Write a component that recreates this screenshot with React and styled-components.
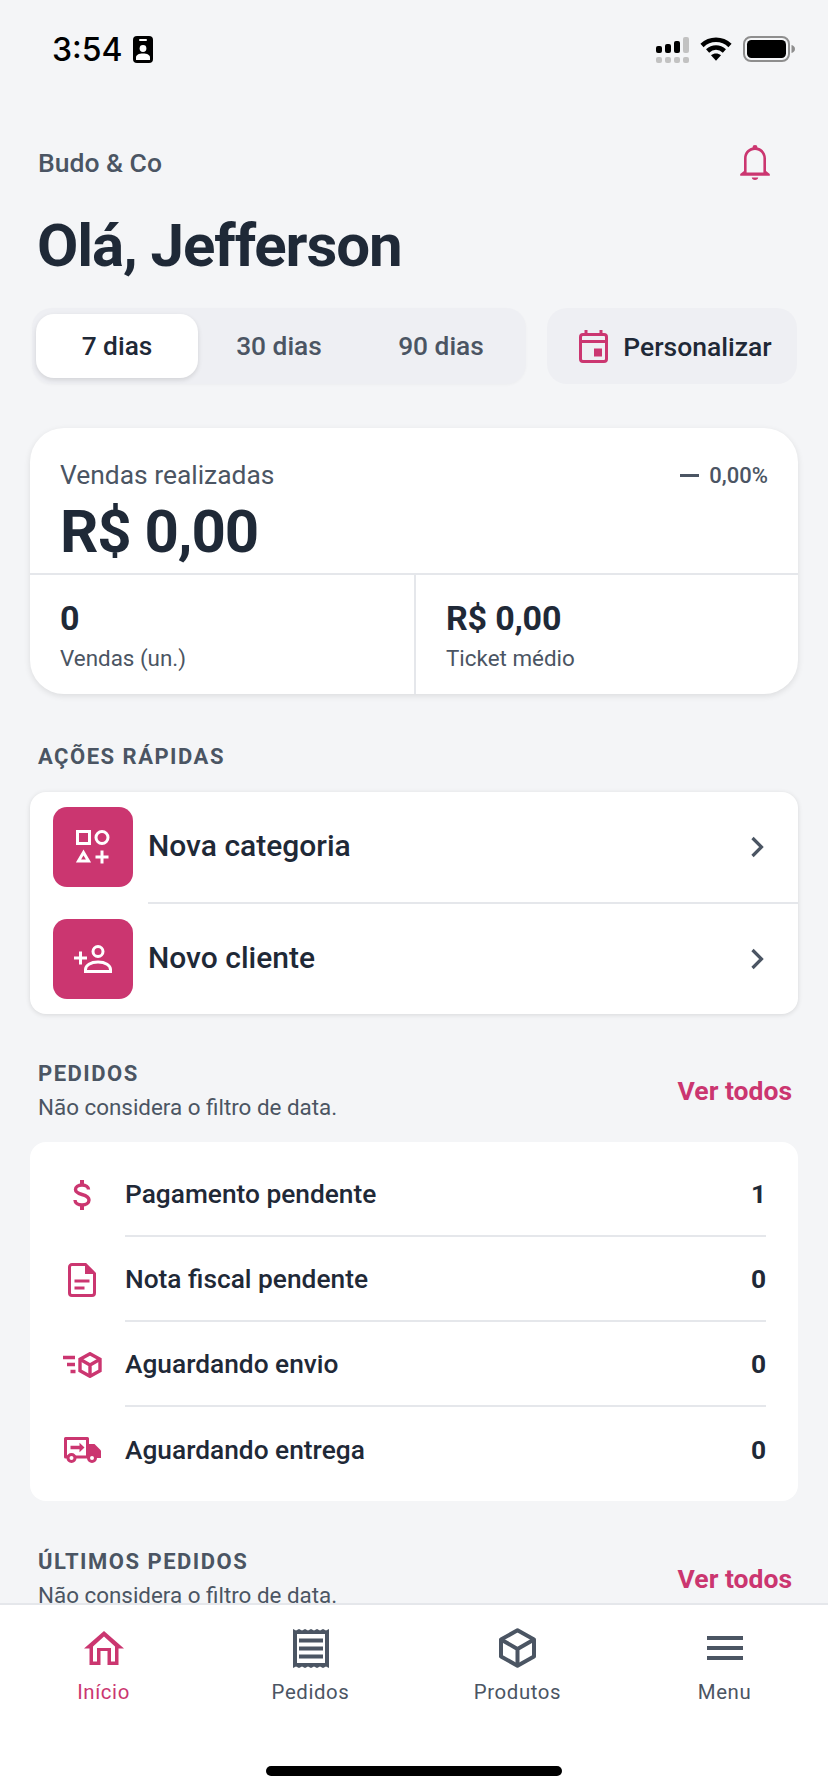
import React from 'react';
import styled, { createGlobalStyle } from 'styled-components';

const pink = '#cb3670';
const dark = '#1f2937';
const grey = '#4b5563';
const line = '#e5e7eb';

const GlobalStyle = createGlobalStyle`
  html, body {
    margin: 0;
    padding: 0;
    background: #f4f5f7;
  }
  * {
    box-sizing: border-box;
  }
`;

const Screen = styled.div`
  width: 828px;
  height: 1792px;
  display: flex;
  flex-direction: column;
  overflow: hidden;
  background: #f4f5f7;
  font-family: Roboto, "Liberation Sans", sans-serif;
  color: ${dark};
`;

const Scroll = styled.div`
  flex: 1;
  min-height: 0;
  overflow: hidden;
`;

const StatusBar = styled.div`
  height: 98px;
  padding: 36px 33px 0 52px;
  display: flex;
  justify-content: space-between;
  align-items: flex-start;
`;

const StatusLeft = styled.div`
  display: flex;
  align-items: center;
  gap: 10px;
`;

const Time = styled.span`
  font-family: Inter, sans-serif;
  font-size: 32px;
  font-weight: 500;
  line-height: 27px;
  color: #000;
`;

const StatusRight = styled.div`
  display: flex;
  align-items: flex-start;
  gap: 11px;
`;

const Content = styled.div`
  padding: 0 30px;
`;

const TopRow = styled.div`
  margin-top: 44px;
  height: 40px;
  padding: 0 28px 0 8px;
  display: flex;
  justify-content: space-between;
  align-items: center;
`;

const Brand = styled.span`
  font-size: 26.5px;
  font-weight: 500;
  color: ${grey};
`;

const Title = styled.h1`
  margin: 29px 0 0;
  padding-left: 7px;
  font-size: 60px;
  font-weight: 700;
  line-height: 70px;
  letter-spacing: -1.1px;
  color: ${dark};
`;

const FilterRow = styled.div`
  margin-top: 27px;
  display: flex;
  gap: 21px;
  padding: 0 1px 0 2px;
`;

const Segment = styled.div`
  width: 494px;
  height: 76px;
  padding: 6px 4px;
  display: flex;
  background: #eeeff3;
  border-radius: 20px;
  box-shadow: 0 1px 3px rgba(0, 0, 0, 0.03);
`;

const Tab = styled.div`
  flex: 1;
  display: flex;
  align-items: center;
  justify-content: center;
  border-radius: 18px;
  font-size: 26.3px;
  font-weight: 500;
  color: ${p => (p.$active ? dark : grey)};
  background: ${p => (p.$active ? '#fff' : 'transparent')};
  box-shadow: ${p => (p.$active ? '0 2px 5px rgba(0, 0, 0, 0.12)' : 'none')};
`;

const CustomButton = styled.div`
  flex: 1;
  height: 76px;
  padding-left: 7px;
  display: flex;
  align-items: center;
  justify-content: center;
  gap: 15px;
  background: #eeeff3;
  border-radius: 20px;
  font-size: 26.5px;
  font-weight: 500;
  color: ${dark};
`;

const SalesCard = styled.div`
  margin-top: 44px;
  height: 266px;
  background: #fff;
  border-radius: 34px;
  box-shadow: 0 2px 6px rgba(0, 0, 0, 0.1);
  display: flex;
  flex-direction: column;
`;

const SalesTop = styled.div`
  height: 147px;
  padding: 30px 30px 0;
  border-bottom: 2px solid ${line};
`;

const SalesHead = styled.div`
  display: flex;
  justify-content: space-between;
  align-items: center;
  height: 34px;
`;

const SalesLabel = styled.span`
  font-size: 26.4px;
  color: ${grey};
`;

const Change = styled.span`
  display: flex;
  align-items: center;
  gap: 10px;
  font-size: 22px;
  font-weight: 500;
  color: ${grey};
`;

const Dash = styled.i`
  display: block;
  width: 19px;
  height: 3px;
  background: ${grey};
`;

const SalesValue = styled.div`
  margin-top: 7px;
  font-size: 60px;
  font-weight: 700;
  line-height: 66px;
  letter-spacing: -1.1px;
  color: ${dark};
`;

const SalesBottom = styled.div`
  flex: 1;
  display: grid;
  grid-template-columns: 1fr 1fr;
`;

const Stat = styled.div`
  padding: 23px 30px 0;
  & + & {
    border-left: 2px solid ${line};
  }
`;

const StatValue = styled.div`
  font-size: 34px;
  font-weight: 700;
  line-height: 40px;
  letter-spacing: -0.2px;
  color: ${dark};
`;

const StatLabel = styled.div`
  margin-top: 3px;
  font-size: 22.4px;
  line-height: 34px;
  color: ${grey};
`;

const SectionLabel = styled.div`
  padding-left: ${p => (p.$flush ? '0' : '8px')};
  margin-top: ${p => p.$top || 0}px;
  font-size: 22px;
  font-weight: 700;
  letter-spacing: 1.5px;
  line-height: 28px;
  color: ${grey};
`;

const QuickCard = styled.div`
  margin-top: 21px;
  height: 222px;
  padding-top: 15px;
  background: #fff;
  border-radius: 16px;
  box-shadow: 0 1px 5px rgba(0, 0, 0, 0.12);
`;

const QuickRow = styled.div`
  height: 80px;
  padding-left: 23px;
  display: flex;
  align-items: center;
  gap: 15px;
  & + & {
    margin-top: 32px;
  }
`;

const QuickIcon = styled.div`
  width: 80px;
  height: 80px;
  flex: none;
  display: flex;
  align-items: center;
  justify-content: center;
  background: ${pink};
  border-radius: 14px;
`;

const QuickBody = styled.div`
  flex: 1;
  height: 80px;
  padding: 0 33px 0 0;
  display: flex;
  align-items: center;
  justify-content: space-between;
  position: relative;
  font-size: 30px;
  font-weight: 500;
  color: ${dark};
  &::after {
    content: ${p => (p.$divided ? '""' : 'none')};
    position: absolute;
    left: 0;
    right: 0;
    bottom: -17px;
    height: 2px;
    background: ${line};
  }
`;

const QuickLabel = styled.span`
  margin-top: -4px;
`;

const SectionHead = styled.div`
  margin-top: ${p => p.$top}px;
  padding: 0 6px 0 8px;
  display: flex;
  justify-content: space-between;
  align-items: center;
`;

const SectionText = styled.div`
  display: flex;
  flex-direction: column;
  gap: 5px;
`;

const SectionNote = styled.div`
  font-size: 22.4px;
  line-height: 28px;
  color: ${grey};
`;

const SeeAll = styled.span`
  font-size: 26.5px;
  font-weight: 700;
  color: ${pink};
`;

const OrdersCard = styled.div`
  margin-top: 21px;
  height: 359px;
  padding: 10px 32px 0;
  background: #fff;
  border-radius: 16px;
`;

const OrderRow = styled.div`
  height: 85px;
  display: flex;
  align-items: center;
  gap: 23px;
`;

const OrderIcon = styled.div`
  width: 40px;
  flex: none;
  display: flex;
  justify-content: center;
`;

const OrderBody = styled.div`
  flex: 1;
  align-self: stretch;
  display: flex;
  align-items: center;
  justify-content: space-between;
  font-size: 26.3px;
  font-weight: 500;
  color: ${dark};
  border-bottom: ${p => (p.$last ? 'none' : `2px solid ${line}`)};
`;

const Count = styled.span`
  font-weight: 700;
`;

const Nav = styled.div`
  height: 189px;
  flex: none;
  background: #fff;
  border-top: 2px solid ${line};
  display: flex;
  flex-direction: column;
  align-items: center;
`;

const NavItems = styled.div`
  width: 100%;
  display: grid;
  grid-template-columns: repeat(4, 207px);
`;

const NavItem = styled.div`
  display: flex;
  flex-direction: column;
  align-items: center;
  font-size: 20.4px;
  letter-spacing: 0.6px;
  color: ${p => (p.$active ? pink : grey)};
`;

const NavIcon = styled.div`
  height: 44px;
  margin-top: 21px;
  display: flex;
  align-items: center;
  justify-content: center;
`;

const NavLabel = styled.div`
  margin-top: 8px;
  line-height: 28px;
`;

const HomeBar = styled.div`
  width: 296px;
  height: 10px;
  margin-top: 60px;
  background: #000;
  border-radius: 5px;
`;

const ContactIcon = () => (
  <svg width="20" height="27" viewBox="0 0 20 27">
    <rect width="20" height="27" rx="4" fill="#000" />
    <rect x="6" y="3" width="8" height="2" rx="1" fill="#fff" />
    <circle cx="10" cy="12.500" r="3.400" fill="#fff" />
    <path d="M3 24v-2.500c0-2.500 2.800-4 7-4s7 1.500 7 4V24z" fill="#fff" />
  </svg>
);

const SignalIcon = () => (
  <svg width="33" height="28" viewBox="0 0 33 28" style={{ marginTop: 1 }}>
    <rect x="0" y="9" width="6" height="7" rx="2" fill="#000" />
    <rect x="9" y="7" width="6" height="9" rx="2" fill="#000" />
    <rect x="18" y="4" width="6" height="12" rx="2" fill="#000" />
    <rect x="27" y="0" width="6" height="16" rx="2" fill="#c2c2c2" />
    <rect x="0" y="20" width="6" height="6" rx="2" fill="#c2c2c2" />
    <rect x="9" y="20" width="6" height="6" rx="2" fill="#c2c2c2" />
    <rect x="18" y="20" width="6" height="6" rx="2" fill="#c2c2c2" />
    <rect x="27" y="20" width="6" height="6" rx="2" fill="#c2c2c2" />
  </svg>
);

const WifiIcon = () => (
  <svg width="32" height="25" viewBox="0 0 32 25" fill="none" stroke="#000" strokeWidth="4.600">
    <path d="M2 9.500c8-7.600 20-7.600 28 0" />
    <path d="M7.600 15c5-4.600 11.800-4.600 16.800 0" />
    <path d="M16 24.800l-5-5.600c3-2.400 7-2.400 10 0z" fill="#000" stroke="none" />
  </svg>
);

const BatteryIcon = () => (
  <svg width="52" height="26" viewBox="0 0 52 26">
    <rect x="1" y="1" width="45" height="24" rx="7" fill="none" stroke="#8e8e8e" strokeWidth="2" />
    <rect x="4" y="4" width="39" height="18" rx="4.500" fill="#000" />
    <path d="M48.500 9c2 .6 3.500 2 3.500 4s-1.500 3.400-3.500 4z" fill="#8e8e8e" />
  </svg>
);

const BellIcon = () => (
  <svg width="30" height="35" viewBox="0 0 30 35">
    <path
      d="M15 0a2.500 2.500 0 0 1 2.500 2.600C22.600 3.700 26 8 26 13.500V26l3.800 3v1.800H.2V29L4 26V13.500C4 8 7.400 3.700 12.500 2.600A2.500 2.500 0 0 1 15 0zM15 5C10 5 6.600 8.700 6.600 13.500V27.500h16.800V13.500C23.400 8.700 20 5 15 5zM11.800 32.500h6.400c0 1.500-1.400 2.500-3.200 2.500s-3.200-1-3.200-2.500z"
      fill={pink}
      fillRule="evenodd"
    />
  </svg>
);

const CalendarIcon = () => (
  <svg width="29" height="33" viewBox="0 0 29 33" fill="none">
    <rect x="1.500" y="4.500" width="26" height="27" rx="2.500" stroke={pink} strokeWidth="3" />
    <path d="M1.500 11.500h26" stroke={pink} strokeWidth="3" />
    <path d="M7 0v5M22 0v5" stroke={pink} strokeWidth="3" />
    <rect x="15" y="18.500" width="8" height="8" fill={pink} />
  </svg>
);

const ShapesIcon = () => (
  <svg width="34" height="34" viewBox="0 0 34 34" fill="none" stroke="#fff" strokeWidth="3">
    <rect x="1.500" y="1.500" width="12" height="12" />
    <circle cx="26" cy="7.500" r="6" />
    <path d="M7.500 22.500l5 8.500h-10z" />
    <path d="M26 20.500v13M19.500 27h13" />
  </svg>
);

const PersonAddIcon = () => (
  <svg width="38" height="28" viewBox="0 0 38 28" fill="none" stroke="#fff" strokeWidth="3">
    <circle cx="24" cy="6.500" r="5" />
    <path d="M11.500 26.500v-2c0-4 5-7.500 12.500-7.500s12.500 3.500 12.500 7.500v2z" />
    <path d="M6.500 6.500v13M0 13h13" />
  </svg>
);

const Chevron = () => (
  <svg width="15" height="22" viewBox="0 0 15 22" fill="none" stroke={grey} strokeWidth="3.200">
    <path d="M2.500 2l9 9-9 9" />
  </svg>
);

const DollarIcon = () => (
  <svg width="18" height="30" viewBox="0 0 18 30" fill="none" stroke={pink} strokeWidth="3.400">
    <path d="M15.500 9.500C15.500 7 13 5 9 5S2.500 7 2.500 9.500c0 3 3 4 6.500 5s7 2.200 7 5.500c0 3-3 5-7 5s-7-2-7-5" />
    <path d="M9 0v5M9 25v5" strokeWidth="4" />
  </svg>
);

const DocIcon = () => (
  <svg width="28" height="34" viewBox="0 0 28 34" fill="none">
    <path d="M1.500 4a2.500 2.500 0 0 1 2.500-2.500h13.500l9 9V30a2.500 2.500 0 0 1-2.500 2.500H4A2.500 2.500 0 0 1 1.500 30z" stroke={pink} strokeWidth="3" />
    <path d="M17 1.500v9.500h9.500L17 1.500z" fill={pink} />
    <path d="M6.500 18h15M6.500 25h10" stroke={pink} strokeWidth="3" />
  </svg>
);

const FastBoxIcon = () => (
  <svg width="39" height="26" viewBox="0 0 39 26" fill="none" stroke={pink} strokeWidth="3.400">
    <path d="M0 5.500h12M4 12.500h8M7.500 19.500h5" />
    <path d="M27 1.700l10 5.600v11.400l-10 5.600-10-5.600V7.300z" />
    <path d="M17 7.300l10 5.700 10-5.700M27 13v11.500" />
  </svg>
);

const TruckIcon = () => (
  <svg width="38" height="26" viewBox="0 0 38 26">
    <path d="M2.500 1.500h22v18.500H2.500z" fill="none" stroke={pink} strokeWidth="3" strokeLinejoin="round" />
    <path d="M26 7h5.500l6.500 6.500V21H26z" fill={pink} />
    <path d="M7.500 8.800h9v-3l5 4.700-5 4.700v-3h-9z" fill={pink} />
    <circle cx="8.500" cy="21" r="3.500" fill="#fff" stroke={pink} strokeWidth="3" />
    <circle cx="29" cy="21" r="3.500" fill="#fff" stroke={pink} strokeWidth="3" />
  </svg>
);

const HomeIcon = () => (
  <svg width="40" height="34" viewBox="0 0 40 34" fill="none">
    <path d="M20 0L40 17.500h-5.500V34H23.500V20h-7v14H5.500V17.500H0z" fill={pink} />
    <path d="M20 5.500L9 15.500V30.500h4V17h14V30.500h4V15.500z" fill="#fff" />
  </svg>
);

const ReceiptIcon = () => (
  <svg width="36" height="39" viewBox="0 0 36 39">
    <path
      d="M0 0l3 1.500L6 0l3 1.500L12 0l3 1.500L18 0l3 1.500L24 0l3 1.500L30 0l3 1.500L36 0v39l-3-1.500L30 39l-3-1.500L24 39l-3-1.500L18 39l-3-1.500L12 39l-3-1.500L6 39l-3-1.500L0 39z"
      fill={grey}
    />
    <rect x="4" y="5" width="28" height="29" fill="#fff" />
    <path d="M6 9.500h24v4H6zM6 17.500h24v4H6zM6 25.500h24v4H6z" fill={grey} />
  </svg>
);

const BoxIcon = () => (
  <svg width="37" height="40" viewBox="0 0 37 40" fill="none" stroke={grey} strokeWidth="4" strokeLinejoin="round">
    <path d="M18.500 2.300L35 11.500v17L18.500 37.700 2 28.500v-17z" />
    <path d="M2 11.500l16.500 9.500L35 11.500M18.500 21v16.700" />
  </svg>
);

const MenuIcon = () => (
  <svg width="36" height="24" viewBox="0 0 36 24">
    <path d="M0 0h36v4H0zM0 10h36v4H0zM0 20h36v4H0z" fill={grey} />
  </svg>
);

const orders = [
  { label: 'Pagamento pendente', count: 1, icon: <DollarIcon /> },
  { label: 'Nota fiscal pendente', count: 0, icon: <DocIcon /> },
  { label: 'Aguardando envio', count: 0, icon: <FastBoxIcon /> },
  { label: 'Aguardando entrega', count: 0, icon: <TruckIcon /> },
];

const navItems = [
  { label: 'Início', icon: <HomeIcon />, active: true },
  { label: 'Pedidos', icon: <ReceiptIcon /> },
  { label: 'Produtos', icon: <BoxIcon /> },
  { label: 'Menu', icon: <MenuIcon /> },
];

export default function App() {
  return (
    <Screen>
      <GlobalStyle />
      <Scroll>
        <StatusBar>
          <StatusLeft>
            <Time>3:54</Time>
            <ContactIcon />
          </StatusLeft>
          <StatusRight>
            <SignalIcon />
            <WifiIcon />
            <BatteryIcon />
          </StatusRight>
        </StatusBar>

        <Content>
          <TopRow>
            <Brand>Budo &amp; Co</Brand>
            <BellIcon />
          </TopRow>
          <Title>Olá, Jefferson</Title>

          <FilterRow>
            <Segment>
              <Tab $active>7 dias</Tab>
              <Tab>30 dias</Tab>
              <Tab>90 dias</Tab>
            </Segment>
            <CustomButton>
              <CalendarIcon />
              Personalizar
            </CustomButton>
          </FilterRow>

          <SalesCard>
            <SalesTop>
              <SalesHead>
                <SalesLabel>Vendas realizadas</SalesLabel>
                <Change>
                  <Dash />
                  0,00%
                </Change>
              </SalesHead>
              <SalesValue>R$ 0,00</SalesValue>
            </SalesTop>
            <SalesBottom>
              <Stat>
                <StatValue>0</StatValue>
                <StatLabel>Vendas (un.)</StatLabel>
              </Stat>
              <Stat>
                <StatValue>R$ 0,00</StatValue>
                <StatLabel>Ticket médio</StatLabel>
              </Stat>
            </SalesBottom>
          </SalesCard>

          <SectionLabel $top={49}>AÇÕES RÁPIDAS</SectionLabel>
          <QuickCard>
            <QuickRow>
              <QuickIcon>
                <ShapesIcon />
              </QuickIcon>
              <QuickBody $divided>
                <QuickLabel>Nova categoria</QuickLabel>
                <Chevron />
              </QuickBody>
            </QuickRow>
            <QuickRow>
              <QuickIcon>
                <PersonAddIcon />
              </QuickIcon>
              <QuickBody>
                <QuickLabel>Novo cliente</QuickLabel>
                <Chevron />
              </QuickBody>
            </QuickRow>
          </QuickCard>

          <SectionHead $top={46}>
            <SectionText>
              <SectionLabel $flush>PEDIDOS</SectionLabel>
              <SectionNote>Não considera o filtro de data.</SectionNote>
            </SectionText>
            <SeeAll>Ver todos</SeeAll>
          </SectionHead>
          <OrdersCard>
            {orders.map((order, i) => (
              <OrderRow key={order.label}>
                <OrderIcon>{order.icon}</OrderIcon>
                <OrderBody $last={i === orders.length - 1}>
                  {order.label}
                  <Count>{order.count}</Count>
                </OrderBody>
              </OrderRow>
            ))}
          </OrdersCard>

          <SectionHead $top={47}>
            <SectionText>
              <SectionLabel $flush>ÚLTIMOS PEDIDOS</SectionLabel>
              <SectionNote>Não considera o filtro de data.</SectionNote>
            </SectionText>
            <SeeAll>Ver todos</SeeAll>
          </SectionHead>
        </Content>
      </Scroll>

      <Nav>
        <NavItems>
          {navItems.map(item => (
            <NavItem key={item.label} $active={item.active}>
              <NavIcon>{item.icon}</NavIcon>
              <NavLabel>{item.label}</NavLabel>
            </NavItem>
          ))}
        </NavItems>
        <HomeBar />
      </Nav>
    </Screen>
  );
}
